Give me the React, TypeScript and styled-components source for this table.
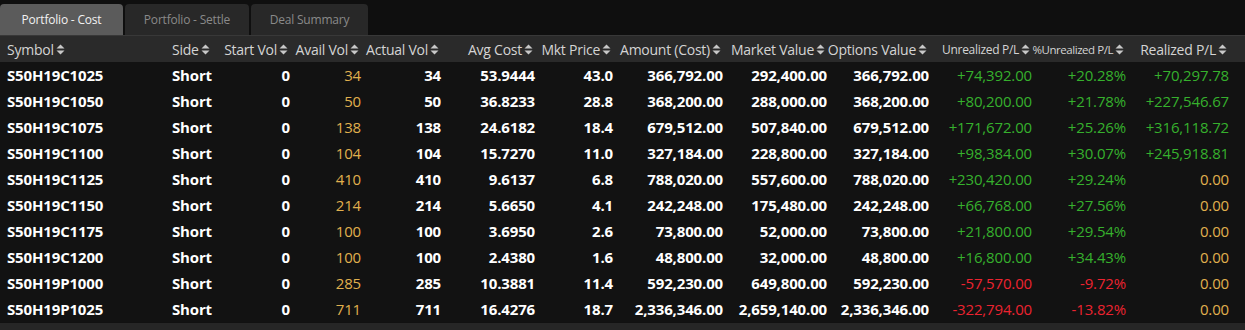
import React from "react";
import styled, { createGlobalStyle } from "styled-components";

const Global = createGlobalStyle`
  html, body { margin: 0; padding: 0; background: #111111; }
  body { font-family: "Open Sans", "DejaVu Sans", sans-serif; }
`;

const COLS = "165px 53px 76px 71px 80px 94px 78px 110px 104px 102px 103px 94px 103px 1fr";

const Page = styled.div`
  width: 1245px;
  height: 330px;
  background: #111111;
  display: flex;
  flex-direction: column;
  overflow: hidden;
`;

const TabBar = styled.div`
  height: 35px;
  box-sizing: border-box;
  padding-top: 4px;
  display: flex;
  gap: 2px;
  background: #0f0f0f;
`;

const Tab = styled.div<{ $active?: boolean; $w: number }>`
  width: ${(p) => p.$w}px;
  height: 31px;
  border-radius: 4px 4px 0 0;
  background: ${(p) => (p.$active ? "#5b5b5b" : "#282828")};
  color: ${(p) => (p.$active ? "#f2f2f2" : "#8a8a8a")};
  font-size: 12px;
  display: flex;
  align-items: center;
  justify-content: center;
  letter-spacing: -0.2px;
`;

const HeaderRow = styled.div`
  display: grid;
  grid-template-columns: ${COLS};
  height: 27px;
  box-sizing: border-box;
  background: #2a2a2a;
  border-top: 1px solid #383838;
  align-items: center;
`;

const HeadCell = styled.div<{ $left?: boolean; $size: number; $track: number }>`
  display: flex;
  align-items: center;
  justify-content: ${(p) => (p.$left ? "flex-start" : "flex-end")};
  padding: ${(p) => (p.$left ? "0 0 0 7px" : "0 6px 0 0")};
  color: #d4d4d4;
  font-size: ${(p) => p.$size}px;
  white-space: nowrap;
  letter-spacing: ${(p) => p.$track}px;
`;

const Body = styled.div`
  display: flex;
  flex-direction: column;
  background: #121212;
`;

const Row = styled.div`
  display: grid;
  grid-template-columns: ${COLS};
  height: 26px;
  align-items: center;
`;

type Tone = "white" | "gold" | "green" | "red";
const toneColor: Record<Tone, string> = {
  white: "#ffffff",
  gold: "#e0b04e",
  green: "#36b02d",
  red: "#ec2330",
};

const Cell = styled.div<{ $left?: boolean; $tone: Tone }>`
  text-align: ${(p) => (p.$left ? "left" : "right")};
  padding: ${(p) => (p.$left ? "0 0 0 7px" : "0 4px 0 0")};
  color: ${(p) => toneColor[p.$tone]};
  font-weight: ${(p) => (p.$tone === "white" ? 700 : 400)};
  font-size: 15px;
  white-space: nowrap;
  letter-spacing: -0.15px;
`;

const Footer = styled.div`
  flex: 1;
  background: #262626;
  margin-top: 1px;
`;

const SortSvg = styled.svg`
  margin-left: 2px;
  flex-shrink: 0;
`;

const SortIcon = () => (
  <SortSvg width="9" height="11" viewBox="0 0 9 11">
    <polygon points="4.5,0.5 8.5,4.5 0.5,4.5" fill="#c8c8c8" />
    <polygon points="0.5,6.5 8.5,6.5 4.5,10.5" fill="#c8c8c8" />
  </SortSvg>
);

const headers: { label: string; left?: boolean; size?: number; track?: number }[] = [
  { label: "Symbol", left: true },
  { label: "Side", left: true },
  { label: "Start Vol" },
  { label: "Avail Vol" },
  { label: "Actual Vol" },
  { label: "Avg Cost" },
  { label: "Mkt Price" },
  { label: "Amount (Cost)" },
  { label: "Market Value" },
  { label: "Options Value" },
  { label: "Unrealized P/L", size: 12, track: -0.3 },
  { label: "%Unrealized P/L", size: 11.5, track: -0.45 },
  { label: "Realized P/L" },
];

type RowData = [string, string, string, string, string, string, string, string, string, string, string, string, string];

const rows: RowData[] = [
  ["S50H19C1025", "Short", "0", "34", "34", "53.9444", "43.0", "366,792.00", "292,400.00", "366,792.00", "+74,392.00", "+20.28%", "+70,297.78"],
  ["S50H19C1050", "Short", "0", "50", "50", "36.8233", "28.8", "368,200.00", "288,000.00", "368,200.00", "+80,200.00", "+21.78%", "+227,546.67"],
  ["S50H19C1075", "Short", "0", "138", "138", "24.6182", "18.4", "679,512.00", "507,840.00", "679,512.00", "+171,672.00", "+25.26%", "+316,118.72"],
  ["S50H19C1100", "Short", "0", "104", "104", "15.7270", "11.0", "327,184.00", "228,800.00", "327,184.00", "+98,384.00", "+30.07%", "+245,918.81"],
  ["S50H19C1125", "Short", "0", "410", "410", "9.6137", "6.8", "788,020.00", "557,600.00", "788,020.00", "+230,420.00", "+29.24%", "0.00"],
  ["S50H19C1150", "Short", "0", "214", "214", "5.6650", "4.1", "242,248.00", "175,480.00", "242,248.00", "+66,768.00", "+27.56%", "0.00"],
  ["S50H19C1175", "Short", "0", "100", "100", "3.6950", "2.6", "73,800.00", "52,000.00", "73,800.00", "+21,800.00", "+29.54%", "0.00"],
  ["S50H19C1200", "Short", "0", "100", "100", "2.4380", "1.6", "48,800.00", "32,000.00", "48,800.00", "+16,800.00", "+34.43%", "0.00"],
  ["S50H19P1000", "Short", "0", "285", "285", "10.3881", "11.4", "592,230.00", "649,800.00", "592,230.00", "-57,570.00", "-9.72%", "0.00"],
  ["S50H19P1025", "Short", "0", "711", "711", "16.4276", "18.7", "2,336,346.00", "2,659,140.00", "2,336,346.00", "-322,794.00", "-13.82%", "0.00"],
];

const toneFor = (col: number, value: string): Tone => {
  if (col === 3) return "gold";
  if (col >= 10) {
    if (value.startsWith("+")) return "green";
    if (value.startsWith("-")) return "red";
    return "gold";
  }
  return "white";
};

export default function App() {
  return (
    <Page>
      <Global />
      <TabBar>
        <Tab $active $w={123}>Portfolio - Cost</Tab>
        <Tab $w={124}>Portfolio - Settle</Tab>
        <Tab $w={117}>Deal Summary</Tab>
      </TabBar>
      <HeaderRow>
        {headers.map((h) => (
          <HeadCell key={h.label} $left={h.left} $size={h.size ?? 14} $track={h.track ?? -0.25}>
            {h.label}
            <SortIcon />
          </HeadCell>
        ))}
        <div />
      </HeaderRow>
      <Body>
        {rows.map((r) => (
          <Row key={r[0]}>
            {r.map((v, i) => (
              <Cell key={i} $left={i < 2} $tone={toneFor(i, v)}>
                {v}
              </Cell>
            ))}
            <div />
          </Row>
        ))}
      </Body>
      <Footer />
    </Page>
  );
}
